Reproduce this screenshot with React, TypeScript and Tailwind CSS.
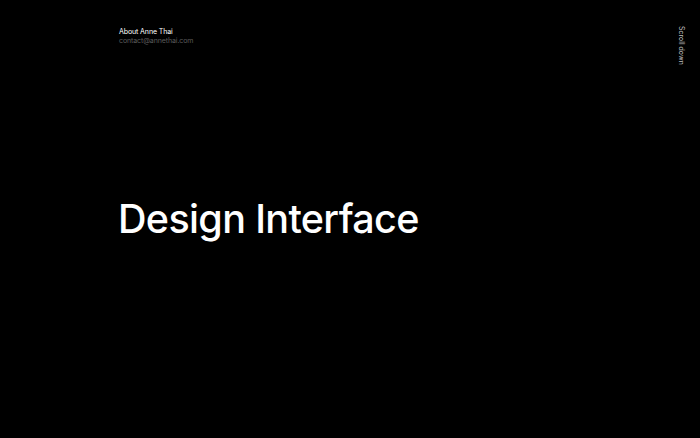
export default function App() {
  return (
    <div
      className="w-[700px] h-[438px] bg-black text-white flex relative overflow-hidden"
      style={{ fontFamily: "Inter, 'Noto Sans', sans-serif" }}
    >
      <div className="flex flex-col pl-[119px] pt-[27px] flex-1">
        <div className="text-[7px] leading-[9px] tracking-[-0.1px] text-white">About Anne Thai</div>
        <div className="text-[7px] leading-[9px] tracking-[-0.1px] text-[#5c5c5c]">contact@annethai.com</div>
        <h1 className="mt-[150px] text-[39.5px] leading-[48px] font-medium tracking-[-0.65px] text-white -ml-[1px]">
          Design Interface
        </h1>
      </div>
      <div className="pt-[26px] pr-[15px]">
        <div className="text-[7px] leading-[7px] text-[#bdbdbd] [writing-mode:vertical-rl]">Scroll down</div>
      </div>
    </div>
  );
}
